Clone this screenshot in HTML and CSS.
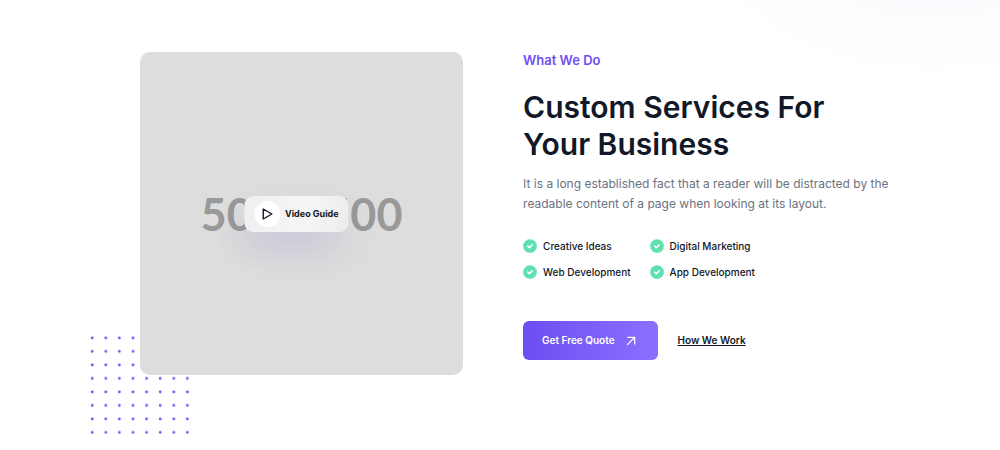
FILE: index.html
```html
<!DOCTYPE html>
<html lang="en">
<head>
<meta charset="utf-8">
<meta name="viewport" content="width=device-width, initial-scale=1">
<title>Custom Services For Your Business</title>
<link rel="stylesheet" href="styles.css">
</head>
<body>
<svg class="defs" width="0" height="0" aria-hidden="true">
  <defs>
    <pattern id="dot-grid" width="13.6" height="13.5" patternUnits="userSpaceOnUse">
      <circle cx="2.2" cy="2" r="1.4" fill="#6f50f0"/>
    </pattern>
    <symbol id="check" viewBox="0 0 14 14">
      <path d="M7 0l1.3.8 1.5-.2.9 1.2 1.5.4.3 1.5 1.2.9-.2 1.5L14 7l-.5 1.3.2 1.4-1.2.9-.3 1.5-1.5.4-.9 1.1-1.5-.2L7 14l-1.3-.6-1.5.2-.9-1.1-1.5-.4-.3-1.5-1.2-.9.2-1.4L0 7l.5-.9-.2-1.5 1.2-.9.3-1.5 1.5-.4.9-1.2 1.5.2z" fill="#5fe0b0"/>
      <path d="M4.8 7.1l1.6 1.5 2.9-2.9" fill="none" stroke="#fff" stroke-width="1.5" stroke-linecap="round" stroke-linejoin="round"/>
    </symbol>
  </defs>
</svg>
<section class="services">
  <div class="media">
    <svg class="dots" viewBox="0 0 100 98" aria-hidden="true"><rect width="100" height="98" fill="url(#dot-grid)"/></svg>
    <div class="placeholder">500 x 500</div>
    <button class="video" type="button">
      <span class="play"><svg width="12" height="14" viewBox="0 0 12 14" aria-hidden="true"><path d="M1.8 2v10L10.4 7z" fill="none" stroke="#111827" stroke-width="1.4" stroke-linejoin="round"/></svg></span>
      Video Guide
    </button>
  </div>
  <div class="content">
    <p class="eyebrow">What We Do</p>
    <h2 class="title">Custom Services For<br>Your Business</h2>
    <p class="text">It is a long established fact that a reader will be distracted by the readable content of a page when looking at its layout.</p>
    <ul class="features">
      <li class="feature"><svg class="check" aria-hidden="true"><use href="#check"/></svg>Creative Ideas</li>
      <li class="feature"><svg class="check" aria-hidden="true"><use href="#check"/></svg>Digital Marketing</li>
      <li class="feature"><svg class="check" aria-hidden="true"><use href="#check"/></svg>Web Development</li>
      <li class="feature"><svg class="check" aria-hidden="true"><use href="#check"/></svg>App Development</li>
    </ul>
    <div class="actions">
      <a class="quote" href="#quote">Get Free Quote
        <svg width="10" height="10" viewBox="0 0 10 10" aria-hidden="true"><path d="M1.2 8.8L8.5 1.5M1.5 1.3h7.2v7.2" fill="none" stroke="#fff" stroke-width="1.2"/></svg>
      </a>
      <a class="how" href="#how">How We Work</a>
    </div>
  </div>
</section>
</body>
</html>
```
FILE: styles.css
```css
* {
  box-sizing: border-box;
}

body {
  margin: 0;
  min-height: 100vh;
  color: #111827;
  background: #fff radial-gradient(ellipse 240px 160px at 93% -80px, #f9f9ff, #fdfdff 75%, #fff) no-repeat;
  font-family: Inter, "Liberation Sans", sans-serif;
}

.defs {
  position: absolute;
}

.services {
  display: grid;
  grid-template-columns: 6fr 7fr;
  gap: 60px;
  align-items: start;
  padding: 52px 10% 60px 14%;
}

.media {
  position: relative;
  z-index: 0;
}

.dots {
  position: absolute;
  z-index: -1;
  left: -50px;
  bottom: -59px;
  width: 100px;
}

.placeholder {
  display: flex;
  align-items: center;
  justify-content: center;
  aspect-ratio: 1;
  border-radius: 10px;
  background: #ddd;
  color: #999;
  font: 700 45px Lato, sans-serif;
}

.video {
  position: absolute;
  top: 50%;
  left: 50%;
  transform: translate(-55%, -50%);
  display: flex;
  align-items: center;
  gap: 5px;
  padding: 5px 10px;
  border: 0;
  border-radius: 9px;
  background: linear-gradient(100deg, #f0f0f0fa, #f6f6f6fc 60%, #ececec);
  box-shadow: -10px 20px 30px -10px #7058e030, 0 18px 40px #50409010;
  color: #111827;
  font: 700 9px/12px Inter, sans-serif;
  white-space: nowrap;
}

.play {
  display: flex;
  align-items: center;
  justify-content: center;
  width: 26px;
  height: 26px;
  border-radius: 50%;
  background: #fff;
}

.eyebrow {
  margin: 0;
  color: #6f4ff2;
  font-size: 13px;
  font-weight: 600;
  line-height: 16px;
}

.title {
  margin: 21px 0 11px;
  font-size: 30px;
  font-weight: 600;
  line-height: 37px;
}

.text {
  margin: 0;
  color: #6b7280;
  font-size: 12px;
  line-height: 20px;
}

.features {
  display: grid;
  grid-template-columns: max-content max-content;
  gap: 12px 19px;
  margin: 25px 0 0;
  padding: 0;
  list-style: none;
}

.feature {
  display: flex;
  align-items: center;
  gap: 6px;
  font-size: 10px;
  font-weight: 500;
  line-height: 14px;
}

.check {
  width: 14px;
  height: 14px;
}

.actions {
  display: flex;
  align-items: center;
  gap: 20px;
  margin-top: 42px;
  font-size: 10px;
  font-weight: 600;
  line-height: 15px;
}

.quote {
  display: flex;
  align-items: center;
  gap: 11px;
  padding: 12px 22px 12px 19px;
  border-radius: 6px;
  background: linear-gradient(90deg, #6d4df2, #8b70ff);
  color: #fff;
  text-decoration: none;
}

.how {
  color: #111827;
}
```
